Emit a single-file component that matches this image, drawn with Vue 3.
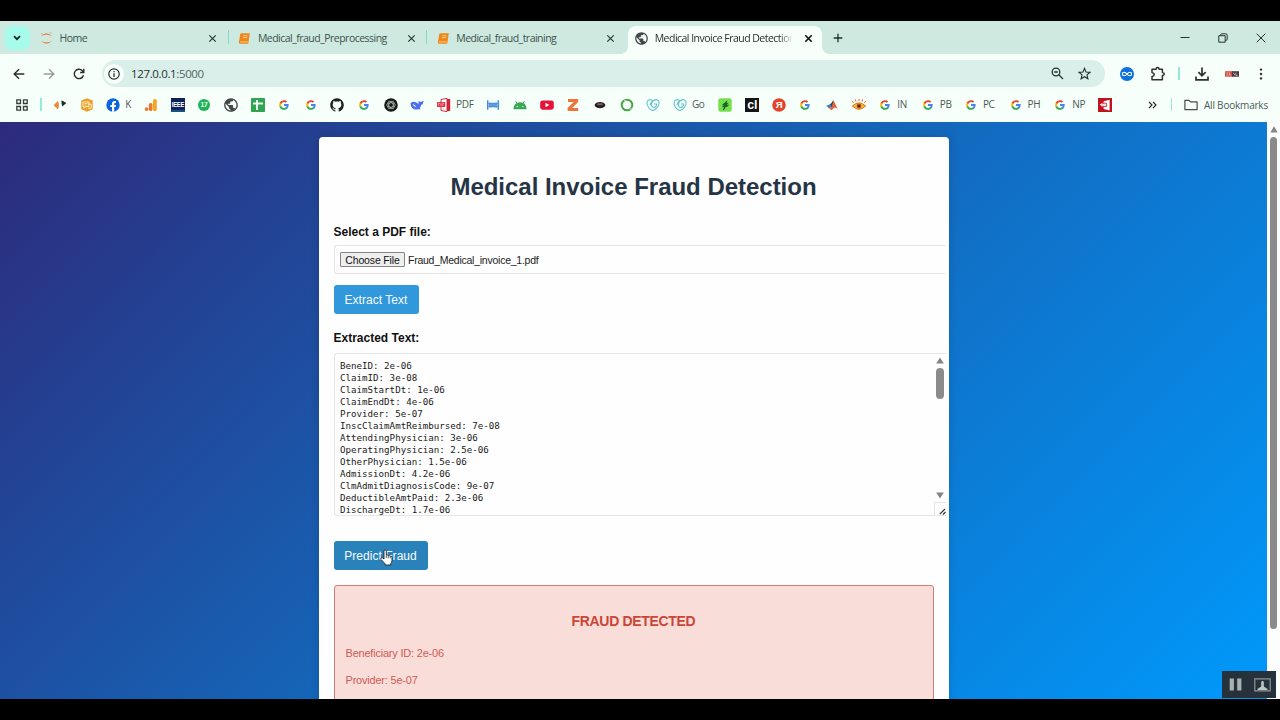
<template>
  <div class="screen">
    <!-- Tab strip -->
    <div class="tab-strip">
      <button class="tab-search">
        <svg width="10" height="8" viewBox="0 0 10 8"><path d="M2 2.2 5 5.2 8 2.2" fill="none" stroke="#10231e" stroke-width="1.7" /></svg>
      </button>
      <div v-for="(tab, i) in tabs" :key="tab.title" class="tab" :class="{ active: tab.active, divided: i < 2 }">
        <svg class="tab-icon" viewBox="0 0 14 14" v-html="icons[tab.icon]"></svg>
        <span class="tab-title">{{ tab.title }}</span>
        <svg class="tab-close" viewBox="0 0 9 9"><path d="M1.3 1.3 7.7 7.7M7.7 1.3 1.3 7.7" /></svg>
      </div>
      <svg class="new-tab" viewBox="0 0 10 10"><path d="M5 .7V9.3M.7 5H9.3" fill="none" stroke="#1d302b" stroke-width="1.3" /></svg>
      <div class="window-controls">
        <svg width="10" height="10" viewBox="0 0 10 10"><path d="M.5 4.5h9" /></svg>
        <svg width="10" height="10" viewBox="0 0 10 10"><path d="M.8 2.7h6.4v6.5H.8zM2.7 2.6V1.8q0-1 1-1h4q1.5 0 1.5 1.5v4q0 1-1 1h-.9" /></svg>
        <svg width="10" height="10" viewBox="0 0 10 10"><path d="M.7.7 9.3 9.3M9.3.7.7 9.3" /></svg>
      </div>
    </div>

    <!-- Address bar -->
    <div class="toolbar">
      <div class="nav">
        <svg width="12" height="12" viewBox="0 0 12 12"><path d="M11.3 6H1.4M6 1.2 1.2 6 6 10.8" stroke="#23302d" /></svg>
        <svg width="12" height="12" viewBox="0 0 12 12"><path d="M.7 6h9.9M6 1.2 10.8 6 6 10.8" stroke="#93a19d" /></svg>
        <svg width="12" height="12" viewBox="0 0 12 12"><path d="M10.5 7.3A4.7 4.7 0 1 1 9.4 2.7L10.7 4.2M10.8.8V4.5H7.1" stroke="#23302d" /></svg>
      </div>
      <div class="omnibox">
        <span class="site-info">
          <svg width="12" height="12" viewBox="0 0 12 12"><circle cx="6" cy="6" r="5.2" fill="none" stroke="#23302d" stroke-width="1.2" /><path d="M6 5.3V9M6 3V4.2" stroke="#23302d" stroke-width="1.3" /></svg>
        </span>
        <span class="url">127.0.0.1<span class="port">:5000</span></span>
        <svg class="omni-icon" width="13" height="13" viewBox="0 0 13 13"><g fill="none" stroke="#26332f" stroke-width="1.3"><circle cx="5" cy="5" r="3.8" /><path d="M7.8 7.8 12 12M3.2 5h3.6" /></g></svg>
        <svg class="omni-icon" width="13" height="13" viewBox="0 0 24 24"><path d="M12 2.5 14.8 9.2 22 9.8 16.5 14.5 18.2 21.6 12 17.8 5.8 21.6 7.5 14.5 2 9.8 9.2 9.2Z" fill="none" stroke="#26332f" stroke-width="2.1" /></svg>
      </div>
      <div class="extensions">
        <svg width="14" height="14" viewBox="0 0 14 14"><circle cx="7" cy="7" r="7" fill="#0b72dc" /><path d="M7 7C5.8 5.5 5 5.2 4.2 5.2a1.8 1.8 0 0 0 0 3.6C5 8.8 5.8 8.5 7 7s2-1.8 2.8-1.8a1.8 1.8 0 0 1 0 3.6C9 8.8 8.2 8.5 7 7Z" fill="none" stroke="#fff" stroke-width="1.1" /></svg>
        <svg class="puzzle" width="16" height="16" viewBox="0 0 16 16"><path d="M2 3.2H6.1Q6.2 1.5 7.6 1.5T9.1 3.2H12.4V6.5Q14.3 6.6 14.3 8T12.4 9.6V13.8H2V10.6Q4.2 10.2 4.2 8.5T2 6.4Z" fill="none" stroke="#26332f" stroke-width="1.5" stroke-linejoin="round" /></svg>
        <i class="bar-line"></i>
        <svg class="download" width="14" height="14" viewBox="0 0 14 14"><path d="M7 .6V8.5M3.4 5.2 7 8.8 10.6 5.2M1 9.6V12.8H13V9.6" fill="none" stroke="#26332f" stroke-width="1.7" /></svg>
        <svg class="badge-icon" width="14" height="6" viewBox="0 0 14 6"><rect width="8" height="5.5" y=".2" fill="#d44c46" /><rect x="7" y=".2" width="7" height="5.5" fill="#493a3c" /><path d="M1.3 2h2M1.3 4h2M4.5 1.5v2.6h1.6M8.3 1.7l1.5 2.5M10.8 1.7v2.6h1.8" stroke="#f4d9d6" stroke-width=".7" fill="none" /></svg>
        <svg class="menu" width="4" height="12" viewBox="0 0 4 12"><g fill="#26332f"><circle cx="2" cy="1.6" r="1.2" /><circle cx="2" cy="6" r="1.2" /><circle cx="2" cy="10.4" r="1.2" /></g></svg>
      </div>
    </div>

    <!-- Bookmarks -->
    <div class="bookmarks">
      <svg class="apps" width="12" height="12" viewBox="0 0 12 12"><path d="M.8.8h3.7v3.7H.8zM7.5.8h3.7v3.7H7.5zM.8 7.5h3.7v3.7H.8zM7.5 7.5h3.7v3.7H7.5z" fill="none" stroke="#33403c" stroke-width="1.3" /></svg>
      <i class="bar-line"></i>
      <div class="bookmark-list">
        <div v-for="(mark, i) in bookmarks" :key="i" class="bookmark" :style="{ width: mark.width + 'px' }">
          <svg viewBox="0 0 14 14" v-html="icons[mark.icon]"></svg>
          <span v-if="mark.label">{{ mark.label }}</span>
        </div>
      </div>
      <svg class="more" width="9" height="8" viewBox="0 0 9 8"><path d="M1 1 4 4 1 7M5 1 8 4 5 7" fill="none" stroke="#26332f" stroke-width="1.2" /></svg>
      <i class="bar-line"></i>
      <svg class="folder" width="14" height="12" viewBox="0 0 14 12"><path d="M.9 10.6V1.3H5L6.5 2.9H13.1V10.6Z" fill="none" stroke="#43504c" stroke-width="1.2" stroke-linejoin="round" /></svg>
      <span class="all-bookmarks">All Bookmarks</span>
    </div>

    <!-- Page -->
    <div class="viewport">
      <main class="page">
        <section class="card">
          <h1>Medical Invoice Fraud Detection</h1>
          <label class="field-label">Select a PDF file:</label>
          <div class="file-input">
            <button class="choose">Choose File</button>
            <span>Fraud_Medical_invoice_1.pdf</span>
          </div>
          <button class="btn">Extract Text</button>
          <label class="field-label extracted">Extracted Text:</label>
          <div class="textarea">
            <pre>{{ extracted.join('\n') }}</pre>
            <div class="area-scroll">
              <svg width="8" height="7" viewBox="0 0 8 7"><path d="M4 .5 7.8 6.5H.2Z" /></svg>
              <span class="area-thumb"></span>
              <svg class="down" width="8" height="7" viewBox="0 0 8 7"><path d="M4 6.5 7.8.5H.2Z" /></svg>
              <span class="resizer">
                <svg width="7" height="7" viewBox="0 0 7 7"><path d="M.8 6.2 6 1M4 6.5 6.5 4" fill="none" stroke="#333" stroke-width="1.2" /></svg>
              </span>
            </div>
          </div>
          <div class="predict">
            <button class="btn hovered">Predict Fraud</button>
            <svg class="cursor" width="13" height="17" viewBox="0 0 13 17"><path d="M4 10V2.2Q4 .8 5.1.8T6.3 2.2V6.2Q7.3 5.5 8.1 6.6 9.3 6 10 7.1 11.8 6.8 12 8.6V11.4Q12 13.6 10.7 14.5V16H5V14.7L1 10.5Q.5 9.4 1.4 8.9T3 9Z" fill="#fff" stroke="#17242c" stroke-width=".9" /><path d="M6.3 6.5V9M8.3 7V9.2M10.2 7.4V9.4" stroke="#17242c" stroke-width=".7" /></svg>
          </div>
          <div class="result">
            <h3>FRAUD DETECTED</h3>
            <p>Beneficiary ID: 2e-06</p>
            <p>Provider: 5e-07</p>
          </div>
        </section>
      </main>
      <div class="page-scroll">
        <svg width="8" height="7" viewBox="0 0 8 7"><path d="M4 .3 7.7 6.5H.3Z" fill="#858585" /></svg>
        <span class="page-thumb"></span>
      </div>
    </div>

    <!-- Recorder overlay -->
    <div class="recorder">
      <svg width="13" height="13" viewBox="0 0 13 13"><path d="M.7 .5h4.2v12H.7zM8.2.5h4.2v12H8.2z" fill="#aab1b3" /></svg>
      <svg width="17" height="14" viewBox="0 0 17 14"><path d="M.8.9h15.4v12H.8z" fill="none" stroke="#8d9698" stroke-width="1.2" /><path d="M7.2 4.2a1.3 1.3 0 0 1 2.6 0V8.6L13.5 11V12H3.5V11L7.2 8.6Z" fill="#bdc4c5" /></svg>
    </div>
  </div>
</template>

<script setup>
const tabs = [
  { title: 'Home', icon: 'jupyter' },
  { title: 'Medical_fraud_Preprocessing', icon: 'notebook' },
  { title: 'Medical_fraud_training', icon: 'notebook' },
  { title: 'Medical Invoice Fraud Detection', icon: 'globe', active: true }
];

// width is the distance to the next bookmark
const step = 26.65;
const bookmarks = [
  { icon: 'diamonds', width: step },
  { icon: 'hexagon', width: step },
  { icon: 'facebook', label: 'K', width: 37.7 },
  { icon: 'analytics', width: step },
  { icon: 'ieee', width: step },
  { icon: 'seventeen', width: step },
  { icon: 'globe', width: step },
  { icon: 'sheet', width: step },
  { icon: 'google', width: step },
  { icon: 'google', width: step },
  { icon: 'github', width: step },
  { icon: 'google', width: step },
  { icon: 'openai', width: step },
  { icon: 'whale', width: step },
  { icon: 'pdf', label: 'PDF', width: 49.4 },
  { icon: 'film', width: step },
  { icon: 'android', width: step },
  { icon: 'youtube', width: step },
  { icon: 'zed', width: step },
  { icon: 'disc', width: step },
  { icon: 'ring', width: step },
  { icon: 'heart', width: step },
  { icon: 'heart', label: 'Go', width: 45.6 },
  { icon: 'leaf', width: step },
  { icon: 'cl', width: step },
  { icon: 'yandex', width: step },
  { icon: 'google', width: step },
  { icon: 'matlab', width: step },
  { icon: 'eye', width: step },
  { icon: 'google', label: 'IN', width: 42.4 },
  { icon: 'google', label: 'PB', width: 43.2 },
  { icon: 'google', label: 'PC', width: 44.6 },
  { icon: 'google', label: 'PH', width: 44.8 },
  { icon: 'google', label: 'NP', width: 45 },
  { icon: 'redbook', width: step }
];

const sans = 'font-family="Liberation Sans, sans-serif" font-weight="bold" text-anchor="middle"';
const heart = '<path d="M6.8 12.6C3.5 11.5.8 8 1 4.8 1.2 1.5 4.7.5 7 3c2.4-2.5 6-1.3 6.1 1.8.2 3.3-3 6.8-6.3 7.8ZM4.2 7.3C3.6 4.7 6.8 2.2 9.1 2.5M8 6h2.6c.3 2.5-1.7 3.7-3.4 3.2C4.7 8.5 5 5.4 7 3" fill="none" stroke="#62c3cc" stroke-width="1.1"/>';

const icons = {
  jupyter: '<path d="M1 4.7Q7-1.8 13 4.7 7 1.2 1 4.7ZM1 9.3Q7 15.8 13 9.3 7 12.8 1 9.3Z" fill="#e58a4e"/><circle cx="2" cy="1.8" r=".6" fill="#999"/><circle cx="11.7" cy="1" r=".6" fill="#999"/>',
  notebook: '<path d="M4 1.3H12.7L11 12.7H2.2Q.8 12.6 1 11L2.3 2.9Q2.6 1.3 4 1.3Z" fill="#ef8616"/><path d="M5.6 4h4.6M5.2 6h4.6" stroke="#fbe2c4" stroke-width=".8"/><path d="M2.2 10.7h8.4" stroke="#fbe2c4" stroke-width=".8"/>',
  globe: '<path transform="translate(-1.2 -1.2) scale(.683)" fill="#3f4a49" d="M12 2C6.48 2 2 6.48 2 12s4.48 10 10 10 10-4.48 10-10S17.52 2 12 2zm-1 17.93c-3.95-.49-7-3.85-7-7.93 0-.62.08-1.21.21-1.79L9 15v1c0 1.1.9 2 2 2v1.93zm6.9-2.54c-.26-.81-1-1.39-1.9-1.39h-1v-3c0-.55-.45-1-1-1H8v-2h2c.55 0 1-.45 1-1V7h2c1.1 0 2-.9 2-2v-.41c2.93 1.19 5 4.06 5 7.41 0 2.08-.8 3.97-2.1 5.39z"/>',
  diamonds: '<path d="M.5 7.2 4.8 3Q6 5 6 7.2T4.8 11.2Z" fill="#e98a3c"/><path d="M8.6 2.2 13.4 5 9.2 8.4Q8 5.3 8.6 2.2Z" fill="#15302f"/>',
  hexagon: '<path d="M7 .3 12.8 2.5V11.2L7 13.8 1.2 11.2V2.5Z" fill="#e9a22b"/><path d="M3 4h6v4.5H6L4 10V8.5H3ZM8 6.2h3.2v4H8" fill="none" stroke="#fff0cf" stroke-width=".9"/><path d="M4.5 5.5h3M4.5 7h2" stroke="#fff0cf" stroke-width=".7"/>',
  facebook: '<circle cx="7" cy="7" r="6.7" fill="#0b63e0"/><path d="M6 13.7V9H4.3V6.9H6V5.5Q6 3 8.5 3H10V5H9Q8.2 5 8.2 5.9V6.9H10L9.7 9H8.2V13.7Z" fill="#fff"/>',
  analytics: '<rect x="9" y="1" width="3.8" height="12" rx="1.6" fill="#f5a623"/><rect x="4.9" y="5" width="3.6" height="8" rx="1.6" fill="#e8792a"/><circle cx="2.6" cy="11.1" r="1.9" fill="#e8792a"/>',
  ieee: `<path d="M0 0h14v14H0z" fill="#0c2458"/><path d="M0 11.8h14V14H0z" fill="#1b4c83"/><text x="7" y="9.2" font-size="7" textLength="12.4" lengthAdjust="spacingAndGlyphs" fill="#fff" ${sans}>IEEE</text>`,
  seventeen: `<circle cx="7" cy="7" r="6" fill="#1fb257"/><text x="7" y="9.4" font-size="6.8" fill="#e8fff0" ${sans}>17</text>`,
  sheet: '<rect width="14" height="14" rx=".8" fill="#31a352"/><path d="M6 2v10M2 5.5h10" stroke="#e9faee" stroke-width="2"/>',
  google: '<g transform="translate(1.7 1.7) scale(.442)"><path fill="#4285f4" d="M22.56 12.25c0-.78-.07-1.53-.2-2.25H12v4.26h5.92c-.26 1.37-1.04 2.53-2.21 3.31v2.77h3.57c2.08-1.92 3.28-4.74 3.28-8.09z"/><path fill="#34a853" d="M12 23c2.97 0 5.46-.98 7.28-2.66l-3.57-2.77c-.98.66-2.23 1.06-3.71 1.06-2.86 0-5.29-1.93-6.16-4.53H2.18v2.84C3.99 20.53 7.7 23 12 23z"/><path fill="#fbbc05" d="M5.84 14.09c-.22-.66-.35-1.36-.35-2.09s.13-1.43.35-2.09V7.07H2.18C1.43 8.55 1 10.22 1 12s.43 3.45 1.18 4.93l2.85-2.22.81-.62z"/><path fill="#ea4335" d="M12 5.38c1.62 0 3.06.56 4.21 1.64l3.15-3.15C17.45 2.09 14.97 1 12 1 7.7 1 3.99 3.47 2.18 7.07l3.66 2.84c.87-2.6 3.3-4.53 6.16-4.53z"/></g>',
  github: '<path transform="translate(.2 .2) scale(.85)" fill="#1b2423" d="M8 0C3.58 0 0 3.58 0 8c0 3.54 2.29 6.53 5.47 7.59.4.07.55-.17.55-.38 0-.19-.01-.82-.01-1.49-2.01.37-2.53-.49-2.69-.94-.09-.23-.48-.94-.82-1.13-.28-.15-.68-.52-.01-.53.63-.01 1.08.58 1.23.82.72 1.21 1.87.87 2.33.66.07-.52.28-.87.51-1.07-1.78-.2-3.64-.89-3.64-3.95 0-.87.31-1.59.82-2.15-.08-.2-.36-1.02.08-2.12 0 0 .67-.21 2.2.82.64-.18 1.32-.27 2-.27.68 0 1.36.09 2 .27 1.53-1.04 2.2-.82 2.2-.82.44 1.1.16 1.92.08 2.12.51.56.82 1.27.82 2.15 0 3.07-1.87 3.75-3.65 3.95.29.25.54.73.54 1.48 0 1.07-.01 1.93-.01 2.2 0 .21.15.46.55.38A8.013 8.013 0 0016 8c0-4.42-3.58-8-8-8z"/>',
  openai: '<circle cx="7" cy="7" r="6.8" fill="#141817"/><g fill="none" stroke="#bcc4c2" stroke-width=".7"><ellipse cx="7" cy="7" rx="4.3" ry="2.2"/><ellipse cx="7" cy="7" rx="4.3" ry="2.2" transform="rotate(60 7 7)"/><ellipse cx="7" cy="7" rx="4.3" ry="2.2" transform="rotate(120 7 7)"/></g>',
  whale: '<path d="M.6 5.2Q2.7 2.8 6 4.3 7.8 5.2 8.6 6.3 8 3.8 9 2.8 9.6 4.1 11 4.1 12 3 13.6 3.1 13.4 6.3 11.2 7 10.8 9 9.7 10L11 11.3 8.2 11.2Q4.6 12.3 2.2 10 .3 8.2.6 5.2Z" fill="#4e6ef2"/><path d="M2.7 6.1Q5 6.4 6.4 9.5 3.5 9 2.7 6.1Z" fill="#f7fffb"/>',
  pdf: '<path d="M4 1.5 10 .3V13.7L4 12.5Z" fill="#fff" stroke="#c9313d"/><path d="M10 1h3.2v12H10z" fill="#d92136"/><path d="M0 4h8.2v5H0z" fill="#dc3240"/><path d="M1.4 8V5.2H3M4 8V5.2M5.7 8V5.2H7.3M5 11.2H8.5" fill="none" stroke="#fbd" stroke-width=".7"/>',
  film: '<path d="M1.7 2.2v9.6M12.3 2.2v9.6" stroke="#4a8bd1" stroke-width="1.5"/><path d="M3 4.3Q7 5.4 11 4.3V9.7Q7 8.7 3 9.7Z" fill="#63a6e8"/><path d="M2 5.8h10M2 8.2h10" stroke="#337bc8" stroke-width=".7"/>',
  android: '<path d="M.4 11.2Q.8 4.5 7 4.3T13.6 11.2Z" fill="#3aa757"/><path d="M3.9 5.2 2.6 3M10.1 5.2 11.4 3" stroke="#3aa757" stroke-width=".9"/><circle cx="4.2" cy="8.5" r=".7" fill="#dff5e5"/><circle cx="9.8" cy="8.5" r=".7" fill="#dff5e5"/>',
  youtube: '<rect x=".2" y="2.4" width="13.6" height="9.3" rx="2.4" fill="#e8113a"/><path d="M5.5 4.8 9.3 7 5.5 9.2Z" fill="#fff"/>',
  zed: '<path d="M2 1H12.2V3.9L6.1 10H12.2V13H1.6V10L7.6 4H2Z" fill="#ee743b"/>',
  disc: '<ellipse cx="7" cy="7.1" rx="5.4" ry="3.1" fill="#292323"/><ellipse cx="7" cy="6.2" rx="3" ry="1" fill="#766c69"/>',
  ring: '<circle cx="7" cy="7" r="5.3" fill="none" stroke="#49a347" stroke-width="2"/><path d="M4 2.1 6.6 3.4M11.4 10 9.8 11.8" stroke="#eafbea" stroke-width=".8"/>',
  heart,
  leaf: '<rect x=".3" y=".3" width="13.4" height="13.4" rx="2" fill="#76df4c"/><path d="M9.5 2.2 3.5 7.2H6L3.8 9.2H6.2L4.5 12H6.2L7.4 9.3Q10.4 9 11 6.6L8.6 7 10.8 4.7 8.5 5Z" fill="#1a6428"/>',
  cl: `<path d="M0 0h14v14H0z" fill="#141414"/><text x="7.2" y="11.3" font-size="12.5" fill="#fff" ${sans}>cl</text>`,
  yandex: `<circle cx="7" cy="7" r="6.8" fill="#e2442c"/><text x="7" y="10.4" font-size="9.6" fill="#fff" ${sans}>Я</text>`,
  matlab: '<path d="M1.2 7.8 5 6.2 6.4 9.3 4 10.2Z" fill="#3e7fb4"/><path d="M5 6.2Q6.8 4.9 8.3 1.9L7.6 8.7 6.4 9.3Z" fill="#26466a"/><path d="M8.3 1.9Q9.8 4.5 12.7 11.2 10.4 8.8 8.7 10 7.3 12.4 6.3 12L4 10.2 6.4 9.3Q8 6.3 8.3 1.9Z" fill="#df6232"/>',
  eye: '<path d="M.3 8Q7 1.8 13.7 8 7 14.6.3 8Z" fill="#f1b733" stroke="#d5721f"/><circle cx="7" cy="8" r="2.3" fill="#b4431c"/><circle cx="7" cy="8" r="1" fill="#3b1d10"/><path d="M1.5 4.9.4 3.1M4 3.5 3.3 1.3M7 3V.8M10 3.5 10.7 1.3M12.5 4.9 13.6 3.1" stroke="#df6b22"/>',
  redbook: '<path d="M0 0h14v14H0z" fill="#bd1420"/><path d="M5.6 3.2 11.6 1.8V12.4L5.6 11Z" fill="#fff"/><path d="M1.6 6.4 4.4 4.8V6H8v1.7H4.4V9Z" fill="#fbd9dc"/><path d="M5.6 5.2H8.6V8.6H5.6" fill="none" stroke="#bd1420" stroke-width=".8"/>'
};

const extracted = [
  'BeneID: 2e-06',
  'ClaimID: 3e-08',
  'ClaimStartDt: 1e-06',
  'ClaimEndDt: 4e-06',
  'Provider: 5e-07',
  'InscClaimAmtReimbursed: 7e-08',
  'AttendingPhysician: 3e-06',
  'OperatingPhysician: 2.5e-06',
  'OtherPhysician: 1.5e-06',
  'AdmissionDt: 4.2e-06',
  'ClmAdmitDiagnosisCode: 9e-07',
  'DeductibleAmtPaid: 2.3e-06',
  'DischargeDt: 1.7e-06'
];
</script>

<style>
body {
  margin: 0;
  background: #000;
  overflow: hidden;
}
</style>

<style scoped>
.screen {
  position: relative;
  box-sizing: border-box;
  display: flex;
  flex-direction: column;
  width: 1280px;
  height: 720px;
  padding: 21px 0;
  background: #000;
  font-family: "Open Sans", "Noto Sans", sans-serif;
  overflow: hidden;
}

svg {
  display: block;
  flex: none;
}

button {
  border: 0;
  padding: 0;
  font-family: inherit;
}

/* Tab strip */
.tab-strip {
  display: flex;
  flex: none;
  align-items: center;
  height: 33px;
  padding-left: 4.5px;
  background: #cde9e0;
}

.tab-search {
  display: flex;
  align-items: center;
  justify-content: center;
  width: 25px;
  height: 24px;
  margin-right: 1px;
  border-radius: 7px;
  background: #a6fbeb;
}

.tab {
  position: relative;
  box-sizing: border-box;
  display: flex;
  align-items: center;
  flex: none;
  width: 198.4px;
  height: 33px;
  padding: 1px 10.5px 0 9.5px;
}

.tab.divided {
  border-right: 1px solid #7fdcc5;
  border-image: linear-gradient(transparent 9px, #7fdcc5 9px, #7fdcc5 23px, transparent 23px) 1;
}

.tab-icon {
  width: 13px;
  height: 13px;
}

.tab-title {
  flex: 1;
  min-width: 0;
  margin: 0 11px 0 6.5px;
  overflow: hidden;
  white-space: nowrap;
  font-size: 10.5px;
  line-height: 16px;
  letter-spacing: -0.52px;
  color: #40524c;
}

.tab-close {
  width: 9px;
  height: 9px;
}

.tab-close path {
  fill: none;
  stroke: #283934;
  stroke-width: 1.2;
}

.tab.active {
  z-index: 1;
  padding-right: 11.5px;
}

.tab.active::before {
  content: "";
  position: absolute;
  z-index: -1;
  inset: 5px 2px 0;
  border-radius: 8px 8px 0 0;
  background: #f7fffb;
}

.tab.active::after {
  content: "";
  position: absolute;
  z-index: -1;
  bottom: 0;
  left: -5px;
  right: -5px;
  height: 7px;
  background:
    radial-gradient(circle at 0 0, transparent 6.5px, #f7fffb 7px) left / 7px 7px no-repeat,
    radial-gradient(circle at 100% 0, transparent 6.5px, #f7fffb 7px) right / 7px 7px no-repeat;
}

.tab.active .tab-title {
  color: #24302d;
  -webkit-mask-image: linear-gradient(90deg, #000 90%, transparent);
  mask-image: linear-gradient(90deg, #000 90%, transparent);
}

.tab.active .tab-close path {
  stroke: #111;
  stroke-width: 1.6;
}

.new-tab {
  width: 10px;
  height: 10px;
  margin-left: 9px;
}

.window-controls {
  display: flex;
  gap: 28px;
  margin-left: auto;
  padding-right: 14.5px;
}

.window-controls path {
  fill: none;
  stroke: #24332f;
  stroke-width: 1;
}

/* Toolbar */
.toolbar {
  box-sizing: border-box;
  display: flex;
  flex: none;
  align-items: center;
  height: 38px;
  padding-top: 1px;
  background: #f7fffb;
}

.nav {
  display: flex;
  gap: 18px;
  width: 89px;
  padding-left: 12.5px;
}

.nav path {
  fill: none;
  stroke-width: 1.4;
}

.omnibox {
  display: flex;
  align-items: center;
  width: 1003px;
  height: 27px;
  border-radius: 14px;
  background: #daefe9;
}

.site-info {
  display: flex;
  align-items: center;
  justify-content: center;
  width: 20px;
  height: 20px;
  margin-left: 2.5px;
  border-radius: 50%;
  background: #f7fffb;
}

.url {
  flex: 1;
  margin-left: 7px;
  font-size: 11.5px;
  letter-spacing: -0.36px;
  color: #26322f;
}

.port {
  color: #53635e;
}

.omni-icon {
  margin-right: 14px;
}

.extensions {
  display: flex;
  align-items: center;
  flex: 1;
  padding-left: 15.5px;
}

.puzzle {
  margin: 0 12.5px 0 15.5px;
}

.download {
  margin: 0 16px 0 15px;
}

.menu {
  margin-left: 20.5px;
}

.bar-line {
  flex: none;
  width: 1.5px;
  height: 13px;
  background: #93ecd8;
}

/* Bookmarks bar */
.bookmarks {
  display: flex;
  flex: none;
  align-items: center;
  height: 30px;
  padding: 0 12px 5px 15.5px;
  box-sizing: border-box;
  background: #f7fffb;
  font-size: 10px;
  letter-spacing: -0.3px;
  color: #4b5a55;
}

.apps {
  margin-right: 12.5px;
}

.bookmark-list {
  display: flex;
  flex: none;
  align-items: center;
  width: 1087px;
  margin-left: 11.5px;
}

.bookmark {
  display: flex;
  align-items: center;
  flex: none;
  gap: 5px;
  white-space: nowrap;
  line-height: 15px;
}

.bookmark svg {
  width: 14px;
  height: 14px;
}

.more {
  margin: 0 14px 0 7.5px;
}

.folder {
  margin: 0 6px 0 auto;
}

.all-bookmarks {
  white-space: nowrap;
  letter-spacing: -0.2px;
}

/* Page */
.viewport {
  display: flex;
  flex: 1;
  min-height: 0;
  background: #fcfefd;
  font-family: "Liberation Sans", Arial, sans-serif;
}

.page {
  box-sizing: border-box;
  width: 1267px;
  padding-top: 15px;
  overflow: hidden;
  background: linear-gradient(135deg, #2d2a7b, #1565b8 48%, #0099fb);
}

.card {
  box-sizing: border-box;
  width: 630px;
  height: 620px;
  margin-left: 318.5px;
  padding: 35px 15px 0;
  border-radius: 4px;
  background: #fefefe;
  box-shadow: 0 0 8px rgba(0, 0, 0, 0.14);
}

h1 {
  margin: 0;
  text-align: center;
  font-size: 24px;
  line-height: 29px;
  letter-spacing: -0.02px;
  color: #253545;
}

.field-label {
  display: block;
  margin-top: 24px;
  font-size: 12px;
  font-weight: bold;
  line-height: 15px;
  color: #111;
}

.file-input {
  box-sizing: border-box;
  display: flex;
  align-items: center;
  gap: 3px;
  width: 611px;
  height: 29px;
  margin: 5px 0 11px;
  padding-left: 5.5px;
  border: 1px solid #e4e4e4;
  border-right: 0;
  border-radius: 3px 0 0 3px;
  font-size: 10.5px;
  letter-spacing: -0.25px;
  color: #222;
}

.choose {
  width: 65px;
  height: 15px;
  border: 1px solid #858585;
  border-radius: 1px;
  background: #efefef;
  font-size: 10.5px;
  letter-spacing: -0.15px;
  white-space: nowrap;
  color: #111;
}

.btn {
  display: block;
  width: 85px;
  height: 29px;
  border-radius: 3px;
  background: #3198db;
  font-size: 12px;
  letter-spacing: 0.04px;
  color: #f6fbff;
}

.btn.hovered {
  width: 94px;
  background: #2a82ba;
}

.field-label.extracted {
  margin-top: 17px;
}

.textarea {
  box-sizing: border-box;
  display: flex;
  width: 612px;
  height: 163px;
  margin-top: 7px;
  border: 1px solid #e6e6e6;
  border-right: 0;
  border-radius: 3px 0 0 3px;
}

pre {
  flex: 1;
  margin: 0;
  padding: 6px 0 0 5.5px;
  overflow: hidden;
  font-family: "DejaVu Sans Mono", monospace;
  font-size: 9.17px;
  line-height: 12px;
  color: #1a1a1a;
}

.area-scroll {
  display: flex;
  flex-direction: column;
  align-items: center;
  width: 12px;
  padding-top: 3px;
  box-sizing: border-box;
}

.area-scroll > svg {
  fill: #858585;
}

.area-thumb {
  width: 8px;
  height: 31px;
  margin-top: 4px;
  border-radius: 4px;
  background: #8b8b8b;
}

.area-scroll .down {
  margin-top: auto;
}

.resizer {
  box-sizing: border-box;
  display: flex;
  align-items: flex-end;
  justify-content: flex-end;
  width: 12px;
  height: 13px;
  margin-top: 3px;
  border: 1px solid #e2e2e2;
  border-width: 1px 0 0 1px;
}

.predict {
  position: relative;
  margin-top: 25px;
}

.cursor {
  position: absolute;
  left: 46.5px;
  top: 8px;
}

.result {
  box-sizing: border-box;
  height: 200px;
  margin-top: 15px;
  padding: 26px 11px 0;
  border: 1px solid #cf7e7b;
  border-radius: 3px;
  background: #f9ddd9;
  color: #ce5b55;
}

h3 {
  margin: 0 0 16px;
  text-align: center;
  font-size: 14px;
  line-height: 18px;
  letter-spacing: -0.32px;
  color: #ca4637;
}

.result p {
  margin: 0 0 12px;
  font-size: 11px;
  line-height: 15px;
  letter-spacing: -0.21px;
}

.page-scroll {
  display: flex;
  flex-direction: column;
  align-items: center;
  flex: 1;
  padding-top: 4px;
}

.page-thumb {
  width: 7px;
  height: 492px;
  margin-top: 4px;
  border-radius: 4px;
  background: #8a8a8a;
}

.recorder {
  position: absolute;
  left: 1222px;
  top: 671px;
  box-sizing: border-box;
  display: flex;
  align-items: center;
  justify-content: space-between;
  width: 54px;
  height: 27px;
  padding: 0 5px 0 7px;
  background: #26323b;
}
</style>
